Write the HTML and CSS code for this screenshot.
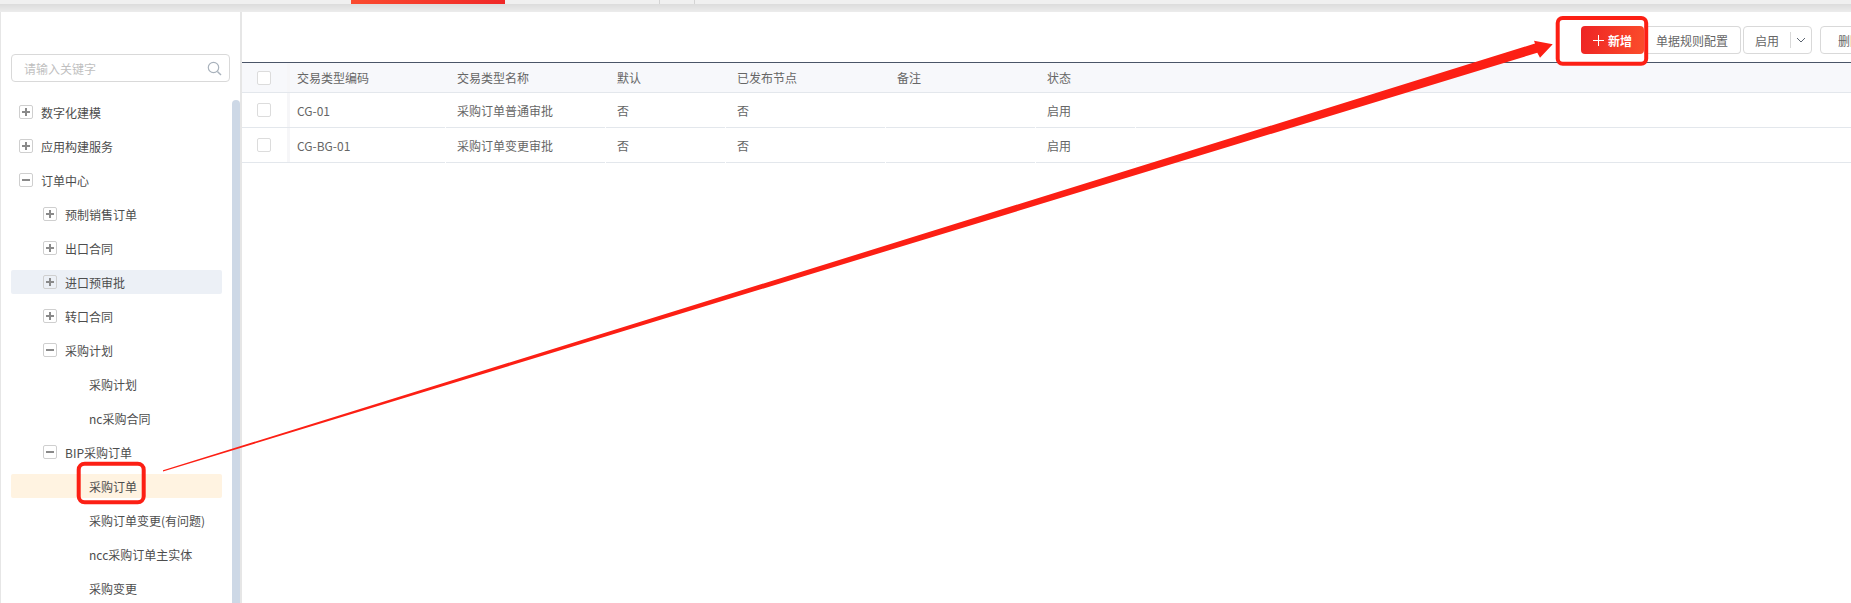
FILE: index.html
```html
<!DOCTYPE html>
<html lang="zh">
<head>
<meta charset="utf-8">
<title>交易类型</title>
<link rel="stylesheet" href="styles.css">
</head>
<body>
<div class="topbar">
  <div class="tabs">
    <div class="tab-spacer"></div>
    <div class="tab-active"></div>
    <div class="tab-rest"></div>
    <div class="tab-small"></div>
  </div>
  <div class="shade"></div>
</div>
<div class="main">
  <aside class="side">
    <div class="search"><span class="ph">请输入关键字</span>
      <svg class="search-ic" width="15" height="15" viewBox="0 0 15 15"><circle cx="6.5" cy="6.5" r="5.2" fill="none" stroke="#a9b2bc" stroke-width="1.2"/><path d="M10.4 10.4L14 14" stroke="#a9b2bc" stroke-width="1.4"/></svg>
    </div>
    <div class="thumb"></div>
    <ul class="tree">
      <li class="row l1"><i class="box plus"></i>数字化建模</li>
      <li class="row l1"><i class="box plus"></i>应用构建服务</li>
      <li class="row l1"><i class="box minus"></i>订单中心</li>
      <li class="row l2"><i class="box plus"></i>预制销售订单</li>
      <li class="row l2"><i class="box plus"></i>出口合同</li>
      <li class="row l2 hover"><i class="box plus"></i>进口预审批</li>
      <li class="row l2"><i class="box plus"></i>转口合同</li>
      <li class="row l2"><i class="box minus"></i>采购计划</li>
      <li class="row l3">采购计划</li>
      <li class="row l3">nc采购合同</li>
      <li class="row l2"><i class="box minus"></i>BIP采购订单</li>
      <li class="row l3 sel">采购订单</li>
      <li class="row l3">采购订单变更(有问题)</li>
      <li class="row l3">ncc采购订单主实体</li>
      <li class="row l3">采购变更</li>
    </ul>
  </aside>
  <section class="content">
    <div class="toolbar">
      <button class="btn primary"><span class="plus-ic"></span>新增</button>
      <button class="btn rule">单据规则配置</button>
      <div class="btn split"><span class="split-l">启用</span><span class="split-r"><svg width="10" height="6" viewBox="0 0 10 6"><path d="M1 1l4 4 4-4" fill="none" stroke="#5b6470" stroke-width="1"/></svg></span></div>
      <button class="btn del">删除</button>
    </div>
    <div class="table">
      <div class="tr head">
        <div class="c c0"><i class="check"></i></div><div class="c c1">交易类型编码</div><div class="c c2">交易类型名称</div><div class="c c3">默认</div><div class="c c4">已发布节点</div><div class="c c5">备注</div><div class="c c6">状态</div><div class="c c7"></div>
      </div>
      <div class="tr">
        <div class="c c0"><i class="check"></i></div><div class="c c1">CG-01</div><div class="c c2">采购订单普通审批</div><div class="c c3">否</div><div class="c c4">否</div><div class="c c5"></div><div class="c c6">启用</div><div class="c c7"></div>
      </div>
      <div class="tr">
        <div class="c c0"><i class="check"></i></div><div class="c c1">CG-BG-01</div><div class="c c2">采购订单变更审批</div><div class="c c3">否</div><div class="c c4">否</div><div class="c c5"></div><div class="c c6">启用</div><div class="c c7"></div>
      </div>
    </div>
  </section>
</div>
<svg class="overlay" width="1851" height="603" viewBox="0 0 1851 603">
  <rect x="78.7" y="463.7" width="65" height="38.6" rx="6" fill="none" stroke="#fc1f14" stroke-width="4"/>
  <rect x="1557.7" y="18" width="88.5" height="45.7" rx="5" fill="none" stroke="#fc1f14" stroke-width="4"/>
  <polygon points="163,470.3 1535,43.5 1534,40.7 1552.7,44.3 1540,57.7 1537.3,52.7 163,471.5" fill="#fc1f14"/>
</svg>
</body>
</html>
```
FILE: styles.css
```css
* { box-sizing: border-box; }
html, body { margin: 0; padding: 0; }
body { width: 1851px; height: 603px; overflow: hidden; background: #fff; font-family: "Noto Sans CJK SC", "Noto Sans", sans-serif; font-size: 12px; color: #555; position: relative; }
.topbar { height: 12px; }
.tabs { height: 4px; display: flex; background: #f0f0f0; }
.shade { height: 8px; background: linear-gradient(#dcdcdc, #ececec); }
.tab-spacer { width: 351px; }
.tab-active { width: 154px; background: linear-gradient(90deg, #fa4a2e, #f02828); }
.tab-rest { width: 155px; border-right: 1px solid #d4d4d4; }
.tab-small { width: 35px; border-right: 1px solid #d4d4d4; }
.main { display: flex; height: 591px; background: #fff; }
.side { width: 242px; flex: none; border-left: 1px solid #e6e6e6; border-right: 2px solid #e6e6e6; padding: 42px 10px 0 10px; position: relative; overflow: hidden; }
.search { width: 219px; height: 28px; border: 1px solid #d9d9d9; border-radius: 4px; display: flex; align-items: center; justify-content: space-between; padding: 0 7px 0 12px; margin-bottom: 18px; }
.ph { color: #bfbfbf; font-size: 12px; }
.thumb { position: absolute; right: 0; top: 88px; bottom: 0; width: 8px; background: #cdd8e6; border-radius: 4px 4px 0 0; }
.tree { list-style: none; margin: 0; padding: 0; width: 211px; }
.row { height: 24px; margin-bottom: 10px; display: flex; align-items: center; color: #4d4d4d; font-size: 12px; border-radius: 2px; white-space: nowrap; }
.l1 { padding-left: 8px; }
.l2 { padding-left: 32px; }
.l3 { padding-left: 78px; }
.hover { background: #ecf0f6; }
.sel { background: #fff3e1; }
.box { width: 14px; height: 14px; border: 1px solid #cfcfcf; border-radius: 2px; margin-right: 8px; position: relative; flex: none; background: #fff; }
.hover .box { background: #ecf0f6; }
.box::before { content: ""; position: absolute; left: 2px; top: 5px; width: 8px; height: 2px; background: #8a8a8a; }
.plus::after { content: ""; position: absolute; left: 5px; top: 2px; width: 2px; height: 8px; background: #8a8a8a; }
.content { flex: 1; min-width: 0; }
.toolbar { height: 50px; display: flex; align-items: flex-start; padding: 14px 0 0 1339px; overflow: hidden; }
.btn { height: 28px; border: 1px solid #d9d9d9; border-radius: 4px; background: #fff; color: #666; font: 12px "Noto Sans CJK SC", sans-serif; padding: 0; flex: none; display: flex; align-items: center; justify-content: center; }
.primary { width: 63px; border: 0; color: #fff; font-weight: 700; background: linear-gradient(100deg, #ee2424, #fb4d2b); }
.plus-ic { width: 11px; height: 11px; margin-right: 4px; background: linear-gradient(#fff, #fff) center/100% 1px no-repeat, linear-gradient(#fff, #fff) center/1px 100% no-repeat; }
.rule { width: 97px; border-left: 0; border-radius: 0 4px 4px 0; }
.split { width: 69px; margin-left: 2px; }
.split-l { flex: 1; text-align: center; }
.split-r { width: 21px; height: 16px; border-left: 1px solid #d9d9d9; display: flex; align-items: center; justify-content: center; }
.del { width: 60px; margin-left: 8px; justify-content: flex-start; padding-left: 17px; }
.table { border-top: 1px solid #4a5568; }
.tr { display: flex; height: 35px; }
.head { height: 30px; background: #f7f8fb; border-bottom: 1px solid #e3e7ec; }
.c { flex: none; padding-left: 11px; height: 100%; display: flex; align-items: center; color: #666; margin-right: 1px; border-bottom: 1px solid #e3e7ec; }
.head .c { border-bottom: 0; }
.c0 { width: 48px; padding-left: 15px; margin-right: 0; background: linear-gradient(90deg, transparent 45px, #f6f6f8 45px); }
.c1 { width: 155px; padding-left: 7px; }
.c2 { width: 159px; }
.c3 { width: 119px; }
.c4 { width: 159px; }
.c5 { width: 149px; }
.c6 { width: 99px; }
.c7 { flex: 1; margin-right: 0; }
.check { width: 14px; height: 14px; border: 1px solid #dcdcdc; border-radius: 2px; background: #fff; display: block; }
.overlay { position: absolute; left: 0; top: 0; pointer-events: none; }
```
